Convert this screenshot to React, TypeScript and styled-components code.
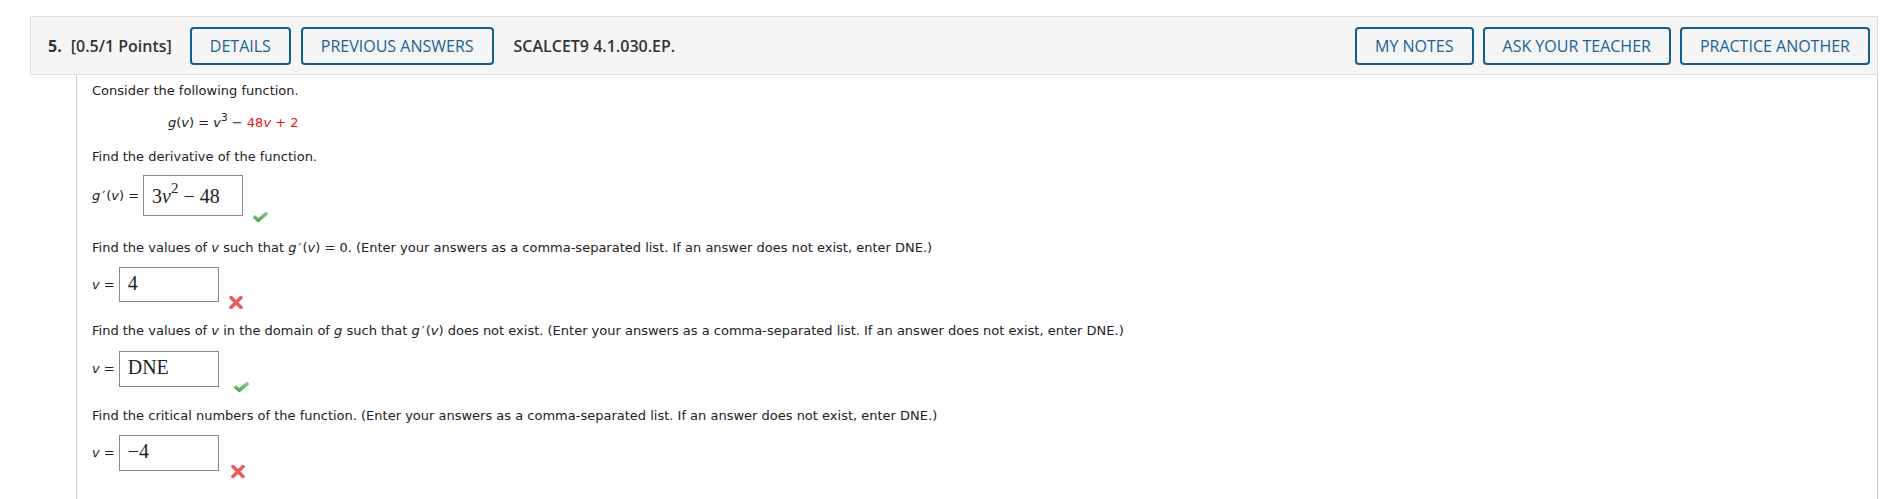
import React from "react";
import styled, { createGlobalStyle } from "styled-components";

const GlobalStyle = createGlobalStyle`
  html, body {
    margin: 0;
    padding: 0;
    background: #ffffff;
  }
`;

const Page = styled.div`
  padding: 16px 11px 0 30px;
  height: 499px;
  box-sizing: border-box;
  display: flex;
  flex-direction: column;
`;

const HeaderBar = styled.div`
  display: flex;
  align-items: center;
  height: 59px;
  box-sizing: border-box;
  background-color: #f5f5f5;
  border: 1px solid #dddddd;
  padding: 0 7px 0 17px;
  font-family: "Open Sans", "Noto Sans", sans-serif;
  color: #333333;
`;

const Number = styled.span`
  font-size: 16px;
  font-weight: 700;
  margin-right: 9px;
`;

const Points = styled.span`
  font-size: 16px;
  font-weight: 600;
  margin-right: 18px;
`;

const Code = styled.span`
  font-size: 16px;
  font-weight: 600;
  margin-left: 20px;
`;

const Button = styled.button<{ $gap?: number }>`
  height: 38px;
  box-sizing: border-box;
  padding: 0 18px;
  margin-left: ${(p) => p.$gap ?? 0}px;
  border: 2px solid #0f5e96;
  border-radius: 4px;
  background: transparent;
  color: #1a6199;
  font-family: "Open Sans", "Noto Sans", sans-serif;
  font-size: 16px;
  font-weight: 500;
  cursor: pointer;
`;

const RightGroup = styled.div`
  display: flex;
  gap: 9px;
  margin-left: auto;
`;

const Content = styled.div`
  flex: 1;
  margin-left: 46px;
  border-left: 1px solid #cccccc;
  border-right: 1px solid #cccccc;
  padding: 7px 15px 0;
  display: flex;
  flex-direction: column;
  font-family: "DejaVu Sans", Verdana, sans-serif;
  font-size: 13px;
  color: #222222;
`;

const Text = styled.div<{ $top?: number; $indent?: number }>`
  line-height: 18px;
  margin-top: ${(p) => p.$top ?? 0}px;
  padding-left: ${(p) => p.$indent ?? 0}px;
  white-space: nowrap;
`;

const I = styled.i`
  font-style: italic;
`;

const Prime = styled.span`
  margin: 0 1px 0 2px;
`;

const Red = styled.span`
  color: #ee1111;
`;

const Sup = styled.sup`
  font-size: 10.5px;
  line-height: 0;
  vertical-align: 6px;
`;

const AnswerRow = styled.div<{ $top: number }>`
  display: flex;
  align-items: center;
  margin-top: ${(p) => p.$top}px;
`;

const Label = styled.span`
  line-height: 18px;
  margin-right: 4px;
`;

const Box = styled.div<{ $h: number }>`
  width: 100px;
  height: ${(p) => p.$h}px;
  box-sizing: border-box;
  border: 1px solid #8a8a8a;
  padding: ${(p) => (p.$h > 38 ? 8 : 3)}px 0 0 8px;
  font-family: "Liberation Serif", "Times New Roman", serif;
  font-size: 20px;
  line-height: 24px;
  color: #222222;
  white-space: nowrap;
`;

const MathSup = styled.sup`
  font-size: 15px;
  line-height: 0;
  vertical-align: 10px;
`;

const Mark = styled.span<{ $drop: number; $left: number }>`
  align-self: flex-end;
  margin-left: ${(p) => p.$left}px;
  margin-bottom: -${(p) => p.$drop}px;
  display: flex;
`;

const Check = () => (
  <svg width="17" height="12" viewBox="0 0 17 12">
    <defs>
      <linearGradient id="cg" x1="0" y1="0" x2="0" y2="1">
        <stop offset="0" stopColor="#8fd68f" />
        <stop offset="1" stopColor="#3f9f45" />
      </linearGradient>
    </defs>
    <path d="M0.5 6.5 L3 4 L6.2 7 L14 0.5 L16.5 3 L6.2 11.5 Z" fill="url(#cg)" />
  </svg>
);

const Cross = () => (
  <svg width="14" height="13" viewBox="0 0 14 13">
    <path
      d="M2 1.5 L12 11.5 M12 1.5 L2 11.5"
      stroke="#ee5a5f"
      strokeWidth="3.6"
      strokeLinecap="round"
      fill="none"
    />
  </svg>
);

const GPrime = () => (
  <>
    <I>g</I>
    <Prime>′</Prime>(<I>v</I>)
  </>
);

const Question = () => (
  <Content>
    <Text>Consider the following function.</Text>
    <Text $top={14} $indent={76}>
      <I>g</I>(<I>v</I>) = <I>v</I>
      <Sup>3</Sup> − <Red>48<I>v</I> + 2</Red>
    </Text>
    <Text $top={16}>Find the derivative of the function.</Text>
    <AnswerRow $top={9}>
      <Label>
        <GPrime /> =
      </Label>
      <Box $h={41}>
        3<I>v</I>
        <MathSup>2</MathSup> − 48
      </Box>
      <Mark $left={9} $drop={7}>
        <Check />
      </Mark>
    </AnswerRow>

    <Text $top={23}>
      Find the values of <I>v</I> such that <GPrime /> = 0. (Enter your answers as a
      comma-separated list. If an answer does not exist, enter DNE.)
    </Text>
    <AnswerRow $top={10}>
      <Label>
        <I>v</I> =
      </Label>
      <Box $h={35}>4</Box>
      <Mark $left={10} $drop={7}>
        <Cross />
      </Mark>
    </AnswerRow>

    <Text $top={20}>
      Find the values of <I>v</I> in the domain of <I>g</I> such that <GPrime /> does not
      exist. (Enter your answers as a comma-separated list. If an answer does not exist, enter DNE.)
    </Text>
    <AnswerRow $top={11}>
      <Label>
        <I>v</I> =
      </Label>
      <Box $h={36}>DNE</Box>
      <Mark $left={14} $drop={6}>
        <Check />
      </Mark>
    </AnswerRow>

    <Text $top={20}>
      Find the critical numbers of the function. (Enter your answers as a comma-separated list. If
      an answer does not exist, enter DNE.)
    </Text>
    <AnswerRow $top={10}>
      <Label>
        <I>v</I> =
      </Label>
      <Box $h={36}>−4</Box>
      <Mark $left={12} $drop={7}>
        <Cross />
      </Mark>
    </AnswerRow>
  </Content>
);

export default function App() {
  return (
    <>
      <GlobalStyle />
      <Page>
        <HeaderBar>
          <Number>5.</Number>
          <Points>[0.5/1 Points]</Points>
          <Button>DETAILS</Button>
          <Button $gap={10}>PREVIOUS ANSWERS</Button>
          <Code>SCALCET9 4.1.030.EP.</Code>
          <RightGroup>
            <Button>MY NOTES</Button>
            <Button>ASK YOUR TEACHER</Button>
            <Button>PRACTICE ANOTHER</Button>
          </RightGroup>
        </HeaderBar>
        <Question />
      </Page>
    </>
  );
}
